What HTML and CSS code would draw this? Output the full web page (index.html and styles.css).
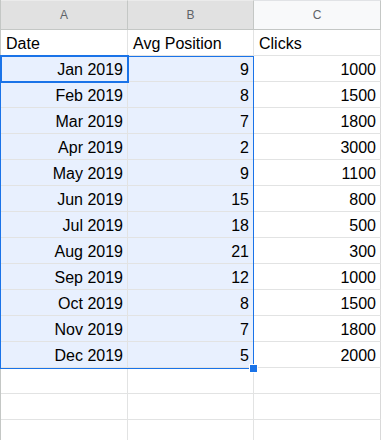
FILE: index.html
```html
<!DOCTYPE html>
<html>
<head>
<meta charset="utf-8">
<link rel="stylesheet" href="styles.css">
</head>
<body>
<div class="sheet">
  <div class="grid">
    <div class="colhead sel">A</div>
    <div class="colhead sel">B</div>
    <div class="colhead">C</div>

    <div class="cell">Date</div><div class="cell">Avg Position</div><div class="cell">Clicks</div>

    <div class="cell r s">Jan 2019</div><div class="cell r s">9</div><div class="cell r">1000</div>
    <div class="cell r s">Feb 2019</div><div class="cell r s">8</div><div class="cell r">1500</div>
    <div class="cell r s">Mar 2019</div><div class="cell r s">7</div><div class="cell r">1800</div>
    <div class="cell r s">Apr 2019</div><div class="cell r s">2</div><div class="cell r">3000</div>
    <div class="cell r s">May 2019</div><div class="cell r s">9</div><div class="cell r">1100</div>
    <div class="cell r s">Jun 2019</div><div class="cell r s">15</div><div class="cell r">800</div>
    <div class="cell r s">Jul 2019</div><div class="cell r s">18</div><div class="cell r">500</div>
    <div class="cell r s">Aug 2019</div><div class="cell r s">21</div><div class="cell r">300</div>
    <div class="cell r s">Sep 2019</div><div class="cell r s">12</div><div class="cell r">1000</div>
    <div class="cell r s">Oct 2019</div><div class="cell r s">8</div><div class="cell r">1500</div>
    <div class="cell r s">Nov 2019</div><div class="cell r s">7</div><div class="cell r">1800</div>
    <div class="cell r s">Dec 2019</div><div class="cell r s">5</div><div class="cell r">2000</div>

    <div class="cell"></div><div class="cell"></div><div class="cell"></div>
    <div class="cell"></div><div class="cell"></div><div class="cell"></div>
    <div class="cell"></div><div class="cell"></div><div class="cell"></div>
  </div>
  <div class="selection"></div>
  <div class="active"></div>
  <div class="handle"></div>
</div>
</body>
</html>
```
FILE: styles.css
```css
html, body {
  margin: 0;
  padding: 0;
  background: #ffffff;
  overflow: hidden;
}
.sheet {
  position: relative;
  width: 381px;
  height: 440px;
  font-family: "Liberation Sans", Arial, sans-serif;
}
.grid {
  display: grid;
  grid-template-columns: 127px 126px 127px;
  grid-template-rows: 30px;
  grid-auto-rows: 26px;
  border-left: 1px solid #c4c7c5;
  width: 380px;
}
.colhead {
  background: #f8f9fa;
  border-right: 1px solid #c4c7c5;
  border-bottom: 1px solid #c4c7c5;
  color: #5f6368;
  font-size: 12px;
  display: flex;
  align-items: center;
  justify-content: center;
  border-top: 1px solid #e1e3e6;
}
.colhead.sel {
  background: #e1e1e1;
  border-top-color: #ebebeb;
}
.cell {
  border-right: 1px solid #e2e3e3;
  border-bottom: 1px solid #e2e3e3;
  font-size: 16px;
  color: #000;
  display: flex;
  align-items: flex-end;
  padding: 0 4px 2px 5px;
  line-height: 18px;
  white-space: nowrap;
}
.cell:nth-child(3n) {
  border-right-color: #d9d9d9;
}
.cell.r {
  justify-content: flex-end;
}
.cell.s {
  background: #e8f0fe;
}
.selection {
  position: absolute;
  left: 0;
  top: 56px;
  width: 254px;
  height: 313px;
  border: 1px solid #1a73e8;
  box-sizing: border-box;
  pointer-events: none;
}
.active {
  position: absolute;
  left: 0;
  top: 55px;
  width: 129px;
  height: 28px;
  border: 2px solid #1a73e8;
  box-sizing: border-box;
}
.handle {
  position: absolute;
  left: 249px;
  top: 364px;
  width: 7px;
  height: 7px;
  background: #1a73e8;
  border: 1px solid #ffffff;
}
```
